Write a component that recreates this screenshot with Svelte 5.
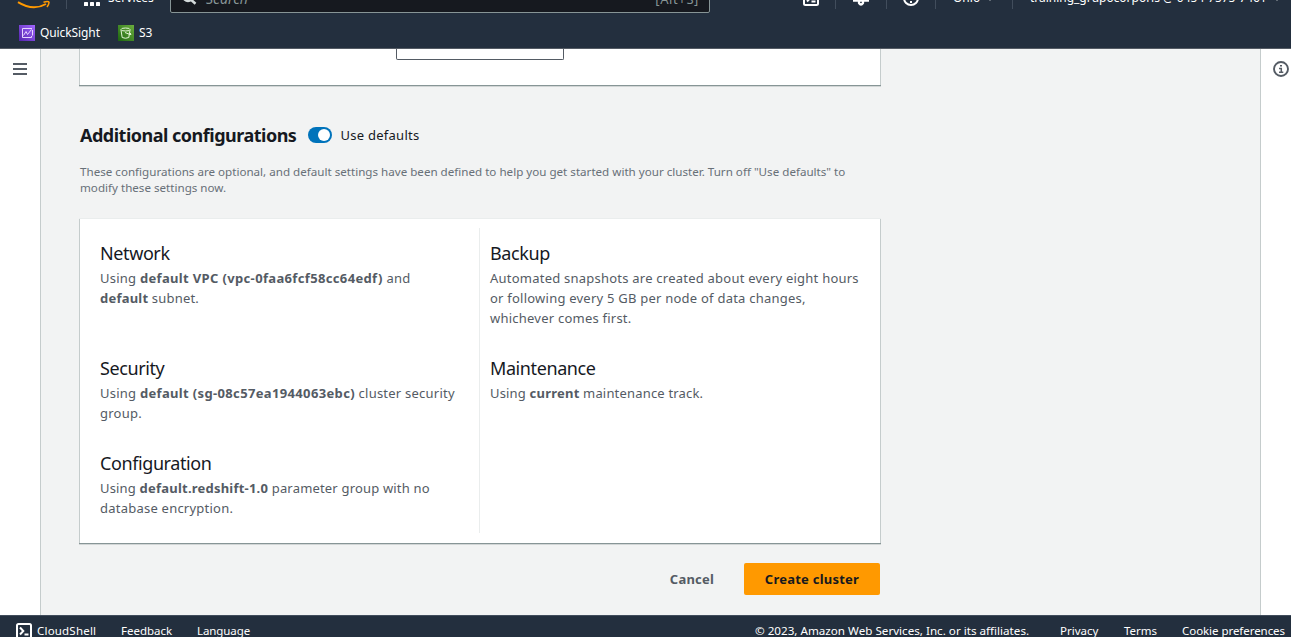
<script>
  const left = [
    { title: 'Network', lines: [[['Using '], ['default VPC (vpc-0faa6fcf58cc64edf)', 1], [' and']], [['default', 1], [' subnet.']]] },
    { title: 'Security', lines: [[['Using '], ['default (sg-08c57ea1944063ebc)', 1], [' cluster security']], [['group.']]] },
    { title: 'Configuration', lines: [[['Using '], ['default.redshift-1.0', 1], [' parameter group with no']], [['database encryption.']]] }
  ];
  const right = [
    { title: 'Backup', lines: [[['Automated snapshots are created about every eight hours']], [['or following every 5 GB per node of data changes,']], [['whichever comes first.']]] },
    { title: 'Maintenance', lines: [[['Using '], ['current', 1], [' maintenance track.']]] }
  ];
  const isShort = (line) => line.some(([text, strong]) => strong && text.length < 21);
</script>

{#snippet terminal()}
  <svg class="terminal" width="16" height="16" viewBox="0 0 16 16" fill="none" stroke="currentColor" stroke-width="2">
    <rect x="1" y="1" width="14" height="14" rx="1.5" />
    <path d="M4 4.500 7.300 8 4 11.500M8.500 11.500H12.500" />
  </svg>
{/snippet}

{#snippet column(sections)}
  <div class="column">
    {#each sections as section}
      <section>
        <h3>{section.title}</h3>
        {#each section.lines as line}
          <p class:tight={isShort(line)}>{#each line as [text, strong]}{#if strong}<b>{text}</b>{:else}{text}{/if}{/each}</p>
        {/each}
      </section>
    {/each}
  </div>
{/snippet}

<div class="page">
  <header>
    <div class="topbar">
      <svg class="smile" width="34" height="22" viewBox="0 0 34 22" fill="none" stroke="#ff9900">
        <path d="M1 14.200Q16 23.500 29 16" stroke-width="2" />
        <path d="M26.500 14.200Q31.500 12.800 32 14.300Q32.200 16 30 19" stroke-width="1.500" />
      </svg>
      <i class="rule"></i>
      <svg class="dots" width="16" height="16" viewBox="0 0 16 16" fill="#fff">
        {#each [0, 6, 12] as x}{#each [0, 6, 12] as y}<rect {x} {y} width="4" height="4" rx=".6" />{/each}{/each}
      </svg>
      <span class="services">Services</span>
      <div class="search">
        <svg width="16" height="16" viewBox="0 0 16 16" fill="none" stroke="#d5dbdb" stroke-width="2.500">
          <circle cx="6" cy="6.500" r="4.500" /><path d="m9 9.700 4.500 4" />
        </svg>
        <em>Search</em><span>[Alt+S]</span>
      </div>
      <div class="tool t1">{@render terminal()}</div>
      <div class="tool t2">
        <svg width="18" height="18" viewBox="0 0 18 18" fill="none" stroke="#fff" stroke-width="2.300">
          <path d="M1 11.500h16M3.500 12Q5 10 5 6a4 4 0 0 1 8 0q0 4 1.500 6M7 12v2q2 3 4 0V12" />
        </svg>
      </div>
      <div class="tool t3">
        <svg width="16" height="16" viewBox="0 0 16 16" fill="none" stroke="#fff" stroke-width="2">
          <circle cx="8" cy="8" r="7" /><path d="M6 6q0-2 2-2t2 2q0 1-2 2.500V10M8 11v2" />
        </svg>
      </div>
      <div class="tool t4"><span class="region">Ohio</span><i class="caret"></i></div>
      <div class="account"><span>training_grupocorporis @ 0454-7575-7461</span><i class="caret"></i></div>
    </div>
    <nav>
      <svg width="16" height="16" viewBox="0 0 16 16" fill="none" stroke="#e6d5ff">
        <defs><linearGradient id="qs" x1="0" y1="1" x2="1" y2="0"><stop stop-color="#5424ad" /><stop offset="1" stop-color="#a166ff" /></linearGradient></defs>
        <rect width="16" height="16" fill="url(#qs)" stroke="none" />
        <path d="M11 3.500H3.500v9h9V11M11 3.500h2M13.500 5v5.500M4.500 10.500 7 6.500l1.500 3L12.500 4.500" stroke-width="1" />
      </svg>
      <span class="quick">QuickSight</span>
      <svg class="bucket" width="16" height="16" viewBox="0 0 16 16" fill="none" stroke="#e3f5d7">
        <defs><linearGradient id="s3" x1="0" y1="1" x2="1" y2="0"><stop stop-color="#1b660f" /><stop offset="1" stop-color="#6cae3e" /></linearGradient></defs>
        <rect width="16" height="16" fill="url(#s3)" stroke="none" />
        <ellipse cx="7.500" cy="4.500" rx="4.500" ry="1.500" />
        <path d="m3 5 1.200 7.500q3.300 1.500 6.600 0L12 5M7 7.500l5 2q1.500.3 1-.5l-1.500-1.500" />
      </svg>
      <span>S3</span>
    </nav>
  </header>

  <div class="body">
    <aside class="side-left"><i></i><i></i><i></i></aside>
    <main>
      <div class="panel previous"><div class="input"></div></div>
      <div class="heading">
        <h2>Additional configurations</h2>
        <span class="toggle"><i></i></span>
        <span class="label">Use defaults</span>
      </div>
      <div class="hint">
        <p>These configurations are optional, and default settings have been defined to help you get started with your cluster. Turn off "Use defaults" to</p>
        <p>modify these settings now.</p>
      </div>
      <div class="panel config">
        {@render column(left)}
        {@render column(right)}
      </div>
      <div class="actions">
        <button class="cancel">Cancel</button>
        <button class="create">Create cluster</button>
      </div>
    </main>
    <aside class="side-right">
      <svg width="16" height="16" viewBox="0 0 16 16" fill="none" stroke="#545b64">
        <circle cx="8" cy="8" r="7" stroke-width="1.900" />
        <path d="M7 4.700h2M6 7.500h2.300v3.500M6 11.300h4.300" stroke-width="1.500" />
      </svg>
    </aside>
  </div>

  <footer>
    {@render terminal()}
    <span class="f1">CloudShell</span>
    <span class="f2">Feedback</span>
    <span class="f3">Language</span>
    <span class="f4">© 2023, Amazon Web Services, Inc. or its affiliates.</span>
    <span class="f5">Privacy</span>
    <span class="f6">Terms</span>
    <span class="f7">Cookie preferences</span>
  </footer>
</div>

<style>
  :global(body) { overflow: hidden; }
  .page { width: 1291px; height: 637px; overflow: hidden; display: flex; flex-direction: column; background: #f2f3f3; font-family: "Noto Sans", sans-serif; font-size: 13px; color: #16191f; }
  .page * { box-sizing: border-box; white-space: nowrap; }
  svg { display: block; flex: none; }
  p, h2, h3 { margin: 0; }
  header { height: 49px; flex: none; overflow: hidden; background: #232f3e; border-bottom: 1px solid #545b64; color: #fff; }
  .topbar { height: 50px; margin-top: -27px; display: flex; align-items: center; font-size: 12px; }
  .smile { margin-left: 17px; align-self: flex-end; margin-bottom: 13px; }
  .rule { width: 1px; height: 22px; background: #414d5c; margin-left: 15px; }
  .dots { margin-left: 17px; }
  .services { margin-left: 8px; width: 46px; line-height: 16px; }
  .search { width: 540px; height: 30px; margin-left: 16px; border: 1px solid #879596; border-radius: 2px; background: #16191f; color: #879596; display: flex; align-items: center; padding: 0 10px 0 11px; font-size: 14px; }
  .search em { flex: 1; margin-left: 8px; }
  .search span { font-size: 13px; letter-spacing: .6px; padding-top: 1px; }
  .tool { display: flex; align-items: center; justify-content: center; height: 22px; border-right: 1px solid #414d5c; }
  .t1 { width: 126px; padding-left: 77px; }
  .t2 { width: 51px; }
  .t3 { width: 49px; }
  .t4 { width: 77px; justify-content: flex-start; padding-left: 17px; }
  .region, .account span { line-height: 16px; }
  .caret { border: 4px solid transparent; border-top: 6px solid #d5dbdb; border-bottom: 0; margin: 0 0 0 6px; }
  .account { display: flex; align-items: center; margin-left: 17px; letter-spacing: -.02px; }
  nav { height: 20px; display: flex; align-items: center; padding-left: 19px; font-size: 12px; }
  nav span { margin-left: 5px; line-height: 16px; padding-bottom: 1px; }
  .quick { width: 60px; letter-spacing: -.1px; }
  .bucket { margin-left: 18px; }
  .body { flex: 1; display: flex; min-height: 0; }
  aside { background: #fff; flex: none; }
  .side-left { width: 41px; border-right: 1px solid #c5cccc; padding: 14px 13px; display: flex; flex-direction: column; gap: 3px; }
  .side-left i { height: 2px; background: #545b64; }
  .side-right { width: 31px; border-left: 1px solid #c5cccc; padding: 12px 0 0 12px; }
  main { flex: 1; padding-left: 38px; }
  .panel { width: 802px; background: #fff; border: solid #c5cccc; border-width: 0 1px; box-shadow: 0 1px 0 #879596, 0 2px 0 rgba(135, 149, 150, .3), 0 -1px 0 #eaeded; }
  .previous { height: 36px; padding-left: 316px; clip-path: inset(0 -3px -4px -3px); }
  .input { width: 168px; height: 11px; border: 1px solid #545b64; border-top: 0; border-radius: 0 0 2px 2px; }
  .heading { height: 28px; margin: 36px 0 0 1px; display: flex; align-items: center; }
  h2 { width: 228px; font-size: 18px; line-height: 28px; font-weight: 700; letter-spacing: -.5px; }
  .toggle { width: 24px; height: 16px; border-radius: 8px; background: #0073bb; padding: 2px 2px 2px 10px; }
  .toggle i { display: block; width: 12px; height: 12px; border-radius: 50%; background: #fff; }
  .label { margin-left: 8.500px; letter-spacing: .26px; }
  .hint { margin: 15px 0 0 1px; color: #687078; font-size: 11.610px; line-height: 16px; }
  .config { height: 324px; margin-top: 23px; padding: 9px 0 11px; display: grid; grid-template-columns: 400px 400px; }
  .column { padding-left: 20px; display: grid; grid-template-rows: 115px 95px 95px; height: 305px; }
  .column:first-child { border-right: 1px solid #eaeded; }
  .column:last-child { padding-left: 10px; }
  section { padding-top: 13px; color: #545b64; letter-spacing: .23px; }
  section p { line-height: 20px; }
  b { letter-spacing: .35px; }
  .tight { letter-spacing: .18px; }
  .tight b { letter-spacing: .22px; }
  h3 { font-size: 18px; font-weight: 400; line-height: 24px; color: #16191f; margin-bottom: 3px; letter-spacing: -.4px; }
  .actions { width: 801px; margin: 20px 0 0; display: flex; justify-content: flex-end; }
  button { height: 32px; border: 0; border-radius: 2px; background: none; padding: 0; font: 700 13px "Noto Sans", sans-serif; color: #545b64; letter-spacing: .24px; }
  .cancel { width: 64px; margin-right: 20px; }
  .create { width: 136px; background: #ff9900; color: #16191f; }
  footer { height: 22px; flex: none; background: #232f3e; border-top: 1px solid #414d5c; color: #fff; font-size: 11.500px; display: flex; padding: 7px 0 0 16px; line-height: 16px; overflow: hidden; }
  .f1 { width: 84px; margin-left: 5px; letter-spacing: .2px; }
  .f2 { width: 76px; }
  .f3 { width: 558px; letter-spacing: -.08px; }
  .f4 { width: 305px; font-size: 11.650px; }
  .f5 { width: 64px; }
  .f6 { width: 58px; }
  .f7 { letter-spacing: -.05px; }
</style>
